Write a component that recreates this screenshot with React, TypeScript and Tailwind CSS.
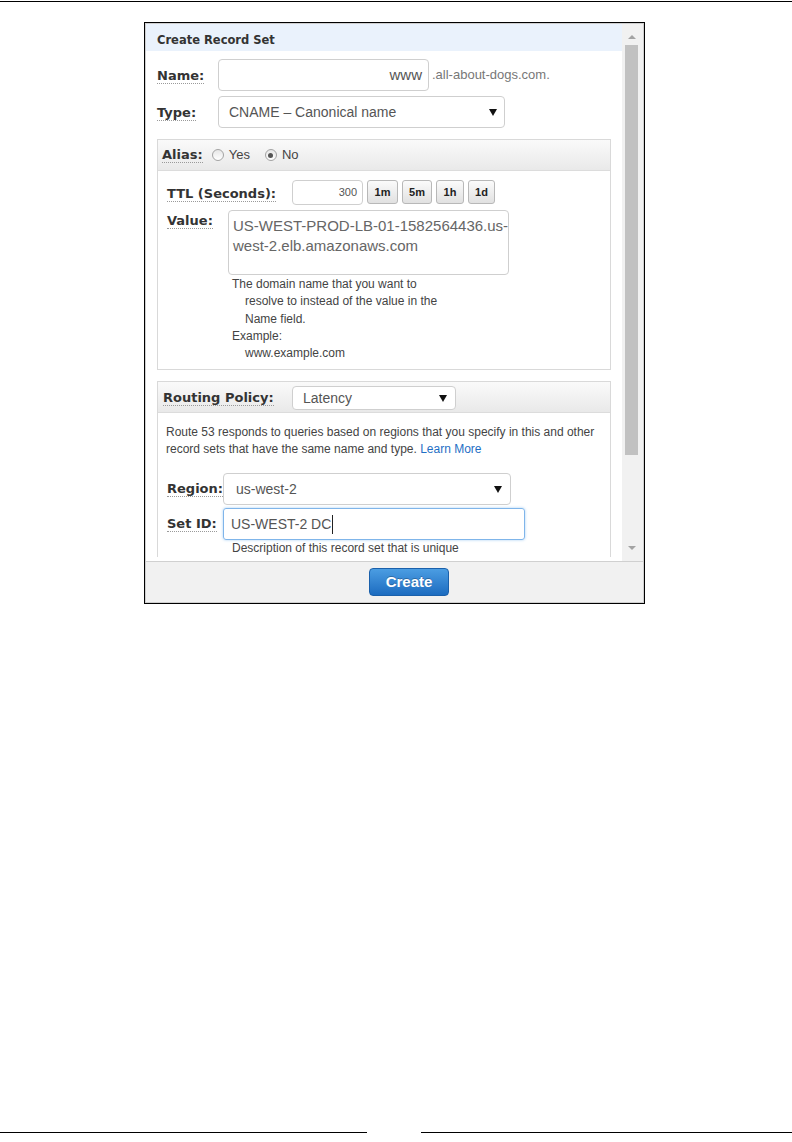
import React from 'react';

const labelFont = { fontFamily: '"DejaVu Sans", Verdana, sans-serif' };
const bodyFont = { fontFamily: '"Liberation Sans", Arial, sans-serif' };

function Label({ children }: { children: React.ReactNode }) {
  return (
    <span
      className="inline-block text-[13px] font-bold leading-[15px] text-[#333] border-b border-dotted border-[#9a9a9a]"
      style={labelFont}
    >
      {children}
    </span>
  );
}

function Caret() {
  return (
    <svg width="8" height="7" viewBox="0 0 8 7" className="shrink-0">
      <polygon points="0,0 8,0 4,7" fill="#111" />
    </svg>
  );
}

function Select({ value, className }: { value: string; className: string }) {
  return (
    <div
      className={`flex items-center justify-between bg-white border border-[#cfcfcf] rounded-[4px] text-[14px] text-[#555] ${className}`}
    >
      <span>{value}</span>
      <Caret />
    </div>
  );
}

function Radio({ checked, label }: { checked?: boolean; label: string }) {
  return (
    <span className="flex items-center gap-[5px]">
      <span className="w-[12px] h-[12px] rounded-full border border-[#a3a3a3] bg-linear-to-b from-[#e6e6e6] to-white flex items-center justify-center">
        {checked && <span className="w-[5px] h-[5px] rounded-full bg-[#555]" />}
      </span>
      <span className="text-[13px] text-[#444]">{label}</span>
    </span>
  );
}

function TtlButton({ label, w }: { label: string; w: string }) {
  return (
    <div
      className={`${w} h-[24px] flex items-center justify-center rounded-[3px] border border-[#b8b8b8] bg-linear-to-b from-[#fbfbfb] to-[#e1e1e1] text-[11px] font-bold text-[#222]`}
    >
      {label}
    </div>
  );
}

function Scrollbar() {
  return (
    <div className="w-[21px] bg-[#f1f1f1] flex flex-col pl-[3px] pt-[11px] pb-[11px]">
      <div className="w-[13px] flex justify-center">
        <svg width="8" height="4" viewBox="0 0 8 4">
          <polygon points="0,4 8,4 4,0" fill="#a3a3a3" />
        </svg>
      </div>
      <div className="w-[13px] h-[410px] mt-[6px] bg-[#c1c1c1]" />
      <div className="flex-1" />
      <div className="w-[13px] flex justify-center">
        <svg width="8" height="4" viewBox="0 0 8 4">
          <polygon points="0,0 8,0 4,4" fill="#a3a3a3" />
        </svg>
      </div>
    </div>
  );
}

export default function App() {
  return (
    <div className="w-[792px] h-[1142px] bg-white flex flex-col" style={bodyFont}>
      <div className="h-px mt-px bg-black" />

      <div className="ml-[144px] mt-[20px] w-[501px] h-[582px] border border-black">
        <div className="h-full border border-[#cfcfcf] flex flex-col">
          <div className="flex h-[537px]">
            {/* scrolling form */}
            <div className="w-[476px] overflow-hidden bg-white">
              <div className="h-[27px] bg-[#eaf2fc] pl-[11px] pt-[9px]">
                <span className="block text-[11.5px] leading-[14px] font-bold text-[#333]" style={labelFont}>
                  Create Record Set
                </span>
              </div>

              <div className="mt-[8px] flex items-center h-[32px] pl-[11px]">
                <div className="w-[61px]">
                  <Label>Name:</Label>
                </div>
                <div className="w-[211px] h-[32px] border border-[#cfcfcf] rounded-[4px] flex items-center justify-end pr-[6px] text-[15px] text-[#555]">
                  www
                </div>
                <span className="ml-[3px] text-[13px] text-[#777]">.all-about-dogs.com.</span>
              </div>

              <div className="mt-[5px] flex items-center h-[32px] pl-[11px]">
                <div className="w-[61px]">
                  <Label>Type:</Label>
                </div>
                <Select value="CNAME – Canonical name" className="w-[287px] h-[32px] pl-[10px] pr-[7px]" />
              </div>

              {/* Alias panel */}
              <div className="mt-[11px] mx-[11px] h-[231px] border border-[#d9d9d9]">
                <div className="h-[31px] flex items-center pl-[4px] bg-linear-to-b from-[#fafafa] to-[#e9e9e9] border-b border-[#dcdcdc]">
                  <Label>Alias:</Label>
                  <span className="ml-[9px]">
                    <Radio label="Yes" />
                  </span>
                  <span className="ml-[15px]">
                    <Radio checked label="No" />
                  </span>
                </div>

                <div className="pl-[9px] pt-[8px]">
                  <div className="flex items-center h-[26px]">
                    <div className="w-[125px] pt-[2px]">
                      <Label>TTL (Seconds):</Label>
                    </div>
                    <div className="w-[71px] h-[25px] border border-[#cfcfcf] rounded-[4px] flex items-center justify-end pr-[5px] text-[11px] text-[#555]">
                      300
                    </div>
                    <div className="flex items-center gap-[4px] ml-[4px]">
                      <TtlButton label="1m" w="w-[31px]" />
                      <TtlButton label="5m" w="w-[30px]" />
                      <TtlButton label="1h" w="w-[28px]" />
                      <TtlButton label="1d" w="w-[27px]" />
                    </div>
                  </div>

                  <div className="flex mt-[5px]">
                    <div className="w-[61px] -mt-[2px]">
                      <Label>Value:</Label>
                    </div>
                    <div className="w-[281px] h-[65px] border border-[#cfcfcf] rounded-[4px] pl-[4px] pt-[5px] text-[15px] leading-[20px] text-[#666] whitespace-nowrap">
                      US-WEST-PROD-LB-01-1582564436.us-
                      <br />
                      west-2.elb.amazonaws.com
                    </div>
                  </div>

                  <div className="ml-[65px] mt-[1px] text-[12px] leading-[17.25px] text-[#444] whitespace-nowrap">
                    <div>The domain name that you want to</div>
                    <div className="pl-[13px]">resolve to instead of the value in the</div>
                    <div className="pl-[13px]">Name field.</div>
                    <div>Example:</div>
                    <div className="pl-[13px]">www.example.com</div>
                  </div>
                </div>
              </div>

              {/* Routing policy panel */}
              <div className="mt-[11px] mx-[11px] border border-[#d9d9d9] border-b-0">
                <div className="h-[31px] flex items-center pl-[5px] bg-linear-to-b from-[#fafafa] to-[#e9e9e9] border-b border-[#dcdcdc]">
                  <div className="w-[129px]">
                    <Label>Routing Policy:</Label>
                  </div>
                  <Select value="Latency" className="self-start mt-[4px] w-[164px] h-[24px] pl-[10px] pr-[8px]" />
                </div>

                <div className="pl-[8px] pt-[11px] text-[12px] leading-[17px] text-[#444] whitespace-nowrap">
                  <div>Route 53 responds to queries based on regions that you specify in this and other</div>
                  <div>
                    record sets that have the same name and type.{' '}
                    <span className="text-[#1f6fc5]">Learn More</span>
                  </div>
                </div>

                <div className="pl-[9px] mt-[15px]">
                  <div className="flex items-center h-[32px]">
                    <div className="w-[56px] -mt-[2px]">
                      <Label>Region:</Label>
                    </div>
                    <Select value="us-west-2" className="w-[288px] h-[32px] pl-[12px] pr-[8px]" />
                  </div>
                  <div className="flex items-center h-[32px] mt-[3px]">
                    <div className="w-[56px] -mt-[3px]">
                      <Label>Set ID:</Label>
                    </div>
                    <div className="w-[302px] h-[32px] border border-[#7fb5ea] rounded-[3px] shadow-[0_0_3px_#a8cff2] flex items-center pl-[7px] text-[14px] text-[#555]">
                      US-WEST-2 DC
                      <span className="w-px h-[19px] bg-[#222] ml-px" />
                    </div>
                  </div>
                  <div className="ml-[65px] text-[12px] leading-[17px] text-[#444] whitespace-nowrap">
                    Description of this record set that is unique
                  </div>
                </div>
              </div>
            </div>

            <Scrollbar />
          </div>

          <div className="flex-1 bg-[#f1f1f1] border-t border-[#d0d0d0] pt-[6px] pl-[223px]">
            <div className="w-[80px] h-[28px] rounded-[4px] border border-[#1a60ab] bg-linear-to-b from-[#4b9de2] to-[#1c6cc0] flex items-center justify-center text-[15px] font-bold text-white [text-shadow:0_-1px_0_rgba(0,0,0,0.25)]">
              Create
            </div>
          </div>
        </div>
      </div>

      <div className="flex-1" />
      <div className="flex justify-between mb-[9px]">
        <div className="w-[367px] h-px bg-black" />
        <div className="w-[371px] h-px bg-black" />
      </div>
    </div>
  );
}
